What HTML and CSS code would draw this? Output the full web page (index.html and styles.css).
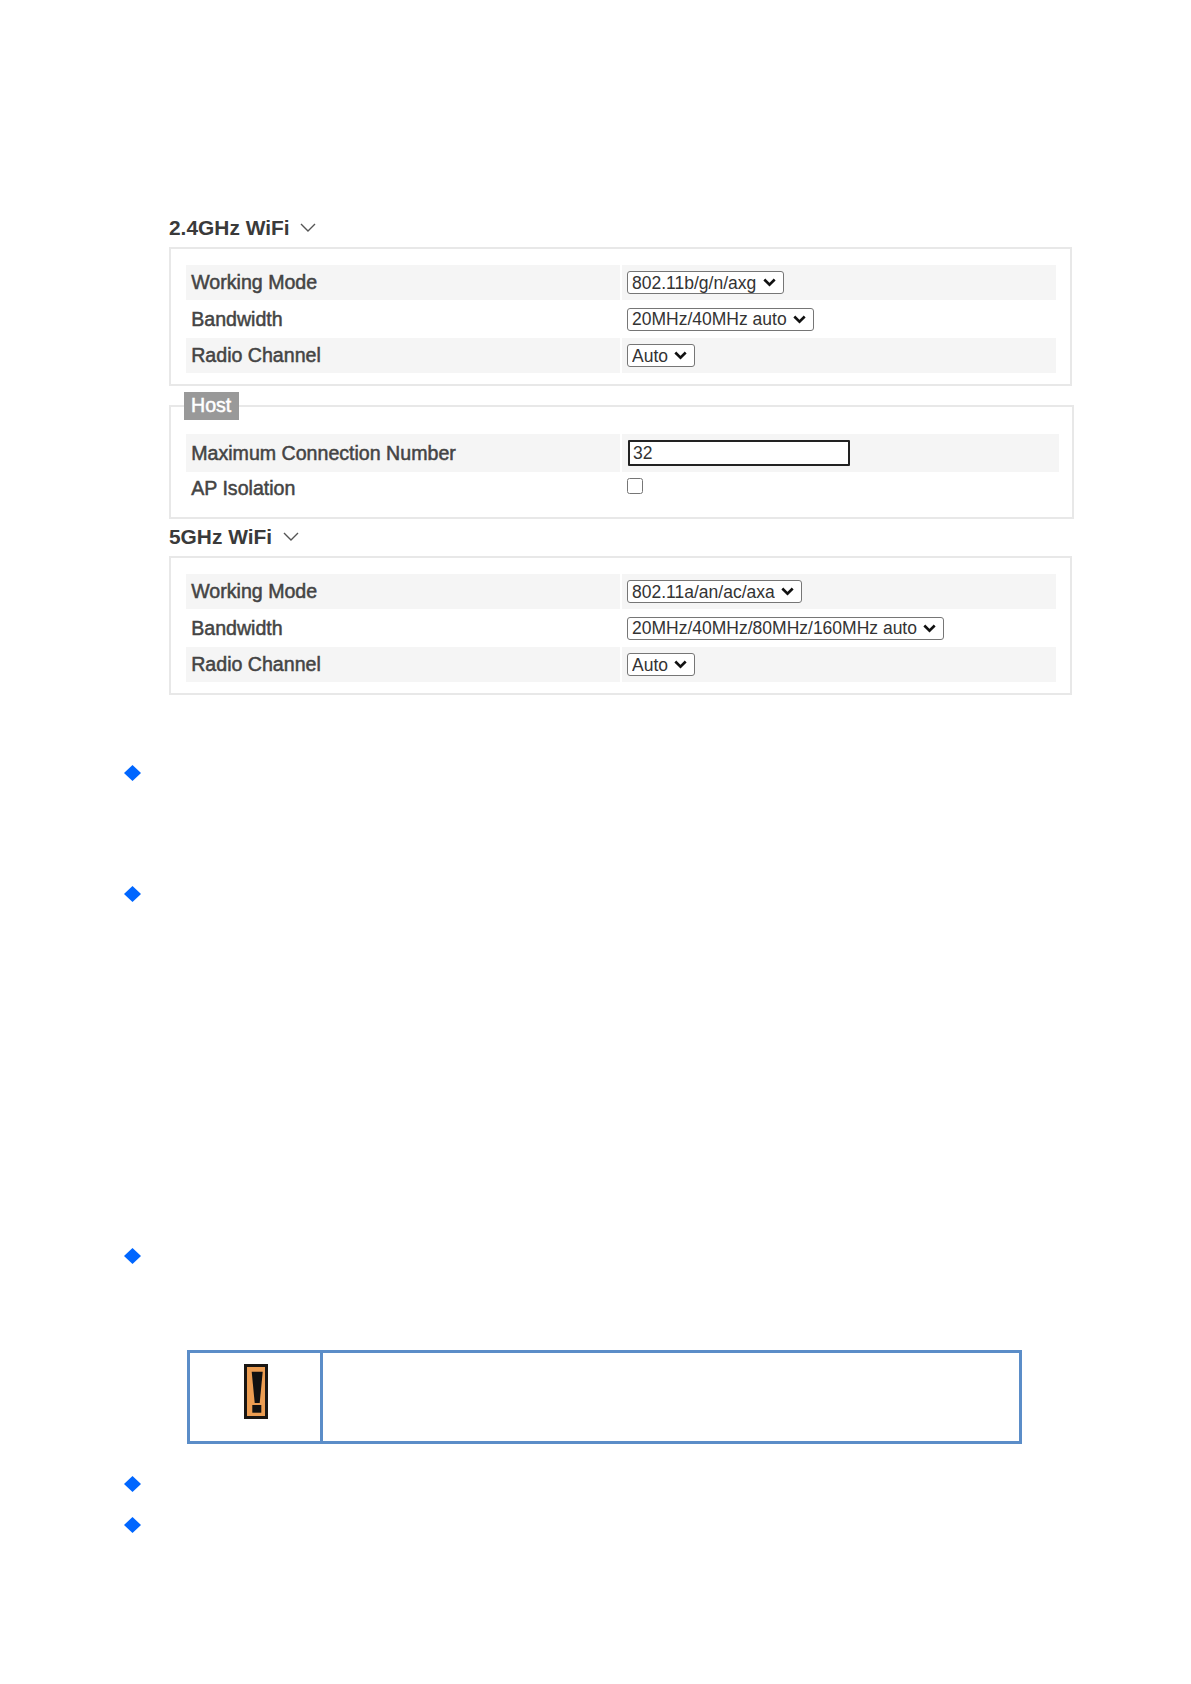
FILE: index.html
```html
<!DOCTYPE html>
<html lang="en">
<head>
<meta charset="utf-8">
<title>WiFi settings</title>
<link rel="stylesheet" href="styles.css">
</head>
<body>
<main class="page">
  <section class="settings">
    <h2 class="heading">2.4GHz WiFi
      <svg class="chev" viewBox="0 0 16 10"><path d="M1 1l7 7 7-7"/></svg>
    </h2>
    <div class="panel">
      <div class="row shade"><div class="label">Working Mode</div><div class="value"><select><option>802.11b/g/n/axg</option></select></div></div>
      <div class="row"><div class="label">Bandwidth</div><div class="value"><select><option>20MHz/40MHz auto</option></select></div></div>
      <div class="row shade"><div class="label">Radio Channel</div><div class="value"><select><option>Auto</option></select></div></div>
    </div>
    <fieldset class="host">
      <legend>Host</legend>
      <div class="row tall shade"><div class="label">Maximum Connection Number</div><div class="value"><input class="num" type="text" value="32"></div></div>
      <div class="row plain"><div class="label">AP Isolation</div><div class="value top"><input class="check" type="checkbox"></div></div>
    </fieldset>
    <h2 class="heading second">5GHz WiFi
      <svg class="chev" viewBox="0 0 16 10"><path d="M1 1l7 7 7-7"/></svg>
    </h2>
    <div class="panel">
      <div class="row shade"><div class="label">Working Mode</div><div class="value"><select><option>802.11a/an/ac/axa</option></select></div></div>
      <div class="row"><div class="label">Bandwidth</div><div class="value"><select><option>20MHz/40MHz/80MHz/160MHz auto</option></select></div></div>
      <div class="row shade"><div class="label">Radio Channel</div><div class="value"><select><option>Auto</option></select></div></div>
    </div>
  </section>

  <div class="bullet b1"><span class="diamond"></span></div>
  <div class="bullet b2"><span class="diamond"></span></div>
  <div class="bullet b3"><span class="diamond"></span></div>

  <div class="notice">
    <div class="notice-icon">
      <svg class="warn" viewBox="0 0 24 55">
        <rect x="1.5" y="1.5" width="21" height="52" fill="#ec9d52" stroke="#1a1613" stroke-width="3"/>
        <path d="M7.7 7.7h11l-3 31.3h-5z" fill="#111"/>
        <rect x="8.3" y="41" width="9" height="7.7" fill="#111"/>
      </svg>
    </div>
    <div class="notice-body"></div>
  </div>

  <div class="bullet b4"><span class="diamond"></span></div>
  <div class="bullet b5"><span class="diamond"></span></div>
</main>
</body>
</html>
```

FILE: styles.css
```css
* { box-sizing: border-box; }
html, body { margin: 0; padding: 0; background: #fff; }
body { font-family: "Liberation Sans", Arial, sans-serif; color: #444; }
.page { width: 1191px; height: 1684px; padding-top: 215px; overflow: hidden; }
.settings { margin-left: 169px; width: 905px; }

.heading {
  display: flex; align-items: center; gap: 10px;
  height: 24px; margin: 0 0 8px; padding-top: 1px;
  font-size: 20.9px; font-weight: bold; color: #3a3a3a;
}
.heading.second { margin: 6px 0 7px; gap: 11px; padding-top: 0; }
.chev { width: 16px; height: 10px; fill: none; stroke: #555; stroke-width: 1.4; }

.panel {
  width: 903px; padding: 16px 14.5px 11px;
  border: 2px solid #e8e8e8;
  display: flex; flex-direction: column; gap: 1.5px;
}
.row { display: flex; gap: 2px; height: 35px; }
.row.tall { height: 38px; }
.row.plain { height: 33px; }
.label {
  width: 434px; padding-left: 5.7px;
  display: flex; align-items: center;
  font-size: 19.6px; color: #444;
  -webkit-text-stroke: 0.5px #444;
}
.value { flex: 1; padding-left: 5.5px; display: flex; align-items: center; }
.value.top { align-items: flex-start; padding-top: 6px; }
.shade .label, .shade .value { background: #f5f5f5; }

select {
  appearance: none;
  font-family: "Liberation Sans", Arial, sans-serif;
  font-size: 17.5px; height: 23px; color: #333;
  background: #fff url("data:image/svg+xml,%3Csvg xmlns='http://www.w3.org/2000/svg' viewBox='0 0 13 9'%3E%3Cpath d='M1.3 1.5l5.2 5.2 5.2-5.2' fill='none' stroke='%23111' stroke-width='2.6'/%3E%3C/svg%3E") no-repeat right 7px center / 13px 9px;
  border: 1px solid #767676; border-radius: 3px;
  padding: 0 26px 0 4px;
}

.host {
  width: 905px; margin: 6px 0 0; padding: 0 13px 12px 14.5px;
  border: 2px solid #e8e8e8; min-width: 0;
}
.host legend {
  margin-left: -1.5px; padding: 0 7px; width: 55px;
  height: 28px; line-height: 27px;
  background: #999; color: #fff;
  font-size: 19.6px; white-space: nowrap;
  -webkit-text-stroke: 0.5px #fff;
}
.host .row.tall { margin-top: 14px; }
.num {
  width: 222px; height: 26px; margin-left: 1px;
  border: 2px solid #222; border-radius: 1px; padding: 0 3px;
  font: 17.5px "Liberation Sans", Arial, sans-serif; color: #333; background: #fff;
}
.check { width: 16px; height: 16px; margin: 0; }

.bullet { height: 16px; padding-left: 124px; }
.diamond {
  display: block; width: 17px; height: 16px; background: #0066ff;
  clip-path: polygon(50% 0, 100% 50%, 50% 100%, 0 50%);
}
.b1 { margin-top: 70px; }
.b2 { margin-top: 105px; }
.b3 { margin-top: 346px; }
.b4 { margin-top: 32px; }
.b5 { margin-top: 25px; }

.notice {
  display: flex; width: 835px; height: 94px; margin: 86px 0 0 187px;
  border: 3px solid #5b8dc8;
}
.notice-icon {
  width: 133px; flex: none; border-right: 3px solid #5b8dc8;
  display: flex; justify-content: center; padding: 11px 0 0 2px;
}
.warn { width: 24px; height: 55px; }
.notice-body { flex: 1; }
```
